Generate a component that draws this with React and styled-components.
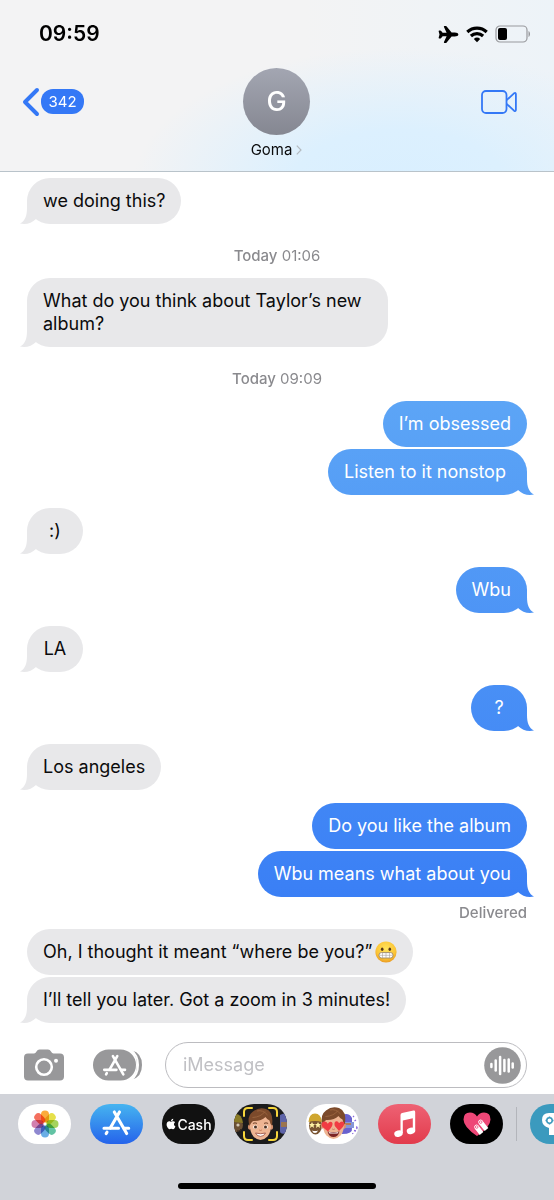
import styled, { createGlobalStyle, css } from 'styled-components'
import { FaApple } from 'react-icons/fa'
import { IoAirplane } from 'react-icons/io5'

const GlobalStyle = createGlobalStyle`
	* {
		box-sizing: border-box;
	}
	body {
		margin: 0;
		background: #fff;
		color: #0b0b0c;
		font-family: Inter, 'Liberation Sans', sans-serif;
	}
	button {
		padding: 0;
		border: 0;
		background: none;
		color: inherit;
		font: inherit;
		cursor: pointer;
	}
	svg {
		display: block;
		flex: none;
	}
`

const Screen = styled.div`
	min-height: 100vh;
	display: flex;
	flex-direction: column;
	overflow-x: hidden;
`

const Header = styled.header`
	padding-bottom: 12px;
	border-bottom: 1px solid #b9c3ca;
	background:
		radial-gradient(ellipse 48% 80% at 72% 108%, #d9efff 0%, #dcf0fe 40%, rgba(230, 242, 251, 0) 100%),
		linear-gradient(90deg, #f3f3f4 55%, #edf3f8 100%);
`

const StatusBar = styled.div`
	height: 68px;
	padding: 0 23px 0 39px;
	display: flex;
	align-items: center;
	justify-content: space-between;
`

const Clock = styled.time`
	color: #000;
	font-size: 21px;
	line-height: 24px;
	font-weight: 600;
`

const StatusIcons = styled.div`
	display: flex;
	align-items: center;
	gap: 7px;
	color: #000;
`

const NavBar = styled.nav`
	padding: 0 37px 0 22px;
	display: grid;
	grid-template-columns: 1fr auto 1fr;
`

const NavButton = styled.button`
	height: 67px;
	display: flex;
	align-items: center;
	gap: 1px;
	justify-self: ${p => p.$end ? 'end' : 'start'};
	margin-right: ${p => p.$end ? '0' : '15px'};
`

const Unread = styled.span`
	min-width: 43px;
	padding: 0 7px;
	border-radius: 12px;
	background: #3478f6;
	color: #fff;
	font-size: 15px;
	line-height: 25px;
`

const Contact = styled.button`
	display: flex;
	flex-direction: column;
	align-items: center;
	gap: 6px;
	margin-left: 14px;
`

const Avatar = styled.span`
	width: 67px;
	height: 67px;
	border-radius: 50%;
	background: linear-gradient(#a3a6b2, #858791);
	color: #fff;
	font-size: 27px;
	line-height: 67px;
	font-weight: 500;
`

const ContactName = styled.span`
	display: flex;
	align-items: center;
	gap: 4px;
	font-size: 15px;
	line-height: 18px;
`

const Thread = styled.main`
	flex: 1;
	padding: 6px 27px 19px;
	display: flex;
	flex-direction: column;
`

const Stamp = styled.time`
	margin: 22px 0 12px;
	color: #8a8a8e;
	font-size: 15px;
	line-height: 20px;
	text-align: center;
	b {
		font-weight: 500;
	}
`

const Receipt = styled.div`
	margin: 8px 0;
	color: #8a8a8e;
	font-size: 15px;
	line-height: 16px;
	font-weight: 500;
	text-align: right;
`

const sent = css`
	align-self: flex-end;
	--fill: linear-gradient(#5fa8f6 30%, #3a7ff5 75%) fixed;
	color: #fff;
`

const received = css`
	align-self: flex-start;
	--fill: #e8e8ea;
`

const Bubble = styled.p`
	${p => p.$mine ? sent : received}
	position: relative;
	min-width: 56px;
	max-width: ${p => p.$long ? '361px' : '80%'};
	margin: ${p => p.$gap}px 0 0;
	padding: 11px 16px 12px;
	border-radius: 23px;
	background: var(--fill);
	font-size: 18px;
	line-height: 23px;
	text-align: ${p => p.$center ? 'center' : 'left'};
	svg {
		display: inline-block;
		vertical-align: -5px;
		margin-left: 3px;
	}
	${p => p.$tail && css`
		&::after {
			content: '';
			position: absolute;
			bottom: 0;
			${p.$mine ? 'right: -7px;' : 'left: -7px; transform: scaleX(-1);'}
			width: 24px;
			height: 23px;
			background: var(--fill);
			clip-path: path('M17 0V7C17 15 19 20 24 22.5C18 24 12 22 8 18L0 0Z');
		}
	`}
`

const Composer = styled.form`
	padding: 0 27px 6px 24px;
	display: flex;
	align-items: center;
`

const RoundButton = styled.button`
	margin-right: ${p => p.$space}px;
`

const Field = styled.div`
	flex: 1;
	height: 46px;
	padding: 0 5px 0 17px;
	border: 1px solid #bcbcc0;
	border-radius: 23px;
	display: flex;
	align-items: center;
`

const MessageInput = styled.input`
	flex: 1;
	min-width: 0;
	padding: 0;
	border: 0;
	outline: 0;
	background: none;
	font: inherit;
	font-size: 18px;
	line-height: 24px;
	&::placeholder {
		color: #c0c0c4;
		opacity: 1;
	}
`

const Tray = styled.footer`
	background: #d1d3d9;
`

const AppStrip = styled.div`
	padding: 10px 0 0 18px;
	display: flex;
	gap: 19px;
	overflow: hidden;
`

const AppButton = styled.button`
	flex: none;
	width: 53px;
	height: 40px;
	border-radius: 20px;
	overflow: hidden;
	display: flex;
	align-items: center;
	justify-content: center;
	background: ${p => p.$fill};
	color: #fff;
	font-size: 14px;
	font-weight: 500;
`

const Divider = styled.span`
	flex: none;
	align-self: center;
	width: 1px;
	height: 34px;
	margin: 0 -6px;
	background: #b3b5bb;
`

const HomeBar = styled.div`
	width: 198px;
	height: 6px;
	margin: 39px auto 0;
	border-radius: 3px;
	background: #000;
`

const HomeArea = styled.div`
	padding-bottom: 11px;
`

function WifiIcon() {
	return (
		<svg width="22" height="17" viewBox="0 0 22 17" fill="none" stroke="currentColor" strokeWidth="3.2">
			<path d="M1.3 6A14.2 14.2 0 0 1 20.7 6" />
			<path d="M4.9 10A9 9 0 0 1 17.1 10" />
			<path d="M7.8 12.9A4.8 4.8 0 0 1 14.2 12.9L11 16.3Z" fill="currentColor" stroke="none" />
		</svg>
	)
}

function BatteryIcon() {
	return (
		<svg width="36" height="18" viewBox="0 0 36 18">
			<rect x="1" y="1" width="31" height="16" rx="4" fill="none" stroke="#98999d" strokeWidth="1.2" />
			<rect x="3" y="3" width="9" height="12" rx="2" />
			<path d="M33.5 6C35.5 7 35.5 11 33.5 12Z" fill="#98999d" />
		</svg>
	)
}

function BackIcon() {
	return (
		<svg width="18" height="30" viewBox="0 0 18 30" fill="none" stroke="#3478f6" strokeWidth="4" strokeLinecap="round" strokeLinejoin="round">
			<path d="M15 3L3 15L15 27" />
		</svg>
	)
}

function VideoIcon() {
	return (
		<svg width="37" height="26" viewBox="0 0 37 26" fill="none" stroke="#3478f6" strokeWidth="1.8" strokeLinejoin="round">
			<rect x="2" y="2" width="24.5" height="22" rx="4" />
			<path d="M26.6 11.2L34 4.3Q35.9 3.2 35.9 5.2V20.8Q35.9 22.8 34 21.7L26.6 14.8" />
		</svg>
	)
}

function GrimaceIcon() {
	return (
		<svg width="22" height="22" viewBox="0 0 22 22" role="img" aria-label="Grimacing face">
			<defs>
				<radialGradient id="grimace" cx=".5" cy=".35" r=".65">
					<stop offset="0" stopColor="#ffe45c" />
					<stop offset=".7" stopColor="#fbc436" />
					<stop offset="1" stopColor="#e99a22" />
				</radialGradient>
			</defs>
			<circle cx="11" cy="11" r="10.6" fill="url(#grimace)" />
			<ellipse cx="7.2" cy="8.3" rx="1.3" ry="1.7" fill="#56371a" />
			<ellipse cx="14.8" cy="8.3" rx="1.3" ry="1.7" fill="#56371a" />
			<rect x="4" y="11.6" width="14" height="5.4" rx="2.4" fill="#fff" stroke="#9b8768" strokeWidth=".9" />
			<path d="M4.2 14.3H17.8M7.5 11.8V16.8M11 11.8V16.8M14.5 11.8V16.8" stroke="#a9a39a" strokeWidth=".6" />
		</svg>
	)
}

function CameraIcon() {
	return (
		<svg width="40" height="32" viewBox="0 0 40 32">
			<path d="M4 4.5H10Q11.5 4.5 12.5 2.5T15.5 .5H24Q26 .5 27 2.5T29.5 4.5H36Q40 4.5 40 8.5V27.5Q40 31.5 36 31.5H4Q0 31.5 0 27.5V8.5Q0 4.5 4 4.5Z" fill="#98989a" />
			<circle cx="20" cy="18" r="7.8" fill="none" stroke="#fff" strokeWidth="2.6" />
			<circle cx="32" cy="11.8" r="2" fill="#fff" />
		</svg>
	)
}

// The three crossed sticks of the App Store mark
function Sticks() {
	return (
		<g fill="none" stroke="#fff" strokeWidth="3.1" strokeLinecap="round">
			<path d="M29.5 8L20.3 24M24.3 8L36.7 29.5" />
			<path d="M14 24.2H28.5M34 24.2H38.7" />
			<path d="M17 28.2L16.2 29.6" />
		</g>
	)
}

function AppsIcon() {
	return (
		<svg width="49" height="32" viewBox="0 0 49 32">
			<path d="M39 1.5Q49 4 49 16T39 30.5Q44 25 44 16T39 1.5Z" fill="#98989a" />
			<rect y=".5" width="43" height="31" rx="15.5" fill="#98989a" />
			<path d="M38 1Q45 6 45 16T38 31" fill="none" stroke="#fff" strokeWidth="2" />
			<g transform="translate(-.5 .5) scale(.84)">
				<Sticks />
			</g>
		</svg>
	)
}

function StoreIcon() {
	return <svg width="53" height="40" viewBox="0 0 53 40"><Sticks /></svg>
}

const waves = [[6, 3], [10.3, 10], [14.7, 17], [19, 11], [23.3, 12], [27.3, 4]]

function VoiceIcon() {
	return (
		<svg width="37" height="37" viewBox="0 0 37 37">
			<circle cx="18.5" cy="18.5" r="18.3" fill="#98989a" />
			<g stroke="#fff" strokeWidth="2.5" strokeLinecap="round">
				{waves.map(([x, h]) => <path key={x} d={`M${x + 1.4} ${18.5 - h / 2}v${h}`} />)}
			</g>
		</svg>
	)
}

const petals = ['#fbab3c', '#e6e04a', '#a5d35c', '#62c3a4', '#6aaee6', '#8f88d0', '#d27fae', '#f4705f']

function PhotosIcon() {
	return (
		<svg width="28" height="28" viewBox="-14 -14 28 28">
			{petals.map((fill, i) => (
				<rect key={fill} x="-4" y="-13.5" width="8" height="12" rx="4" fill={fill} transform={`rotate(${i * 45})`} style={{ mixBlendMode: 'multiply' }} />
			))}
		</svg>
	)
}

function Boy({ hearts }) {
	return (
		<g>
			<ellipse cx="15.7" cy="23" rx="1.8" ry="2.8" fill="#d8936f" />
			<ellipse cx="37.3" cy="23" rx="1.8" ry="2.8" fill="#d8936f" />
			<path d="M16 16Q15 28 19.5 32.5Q26.5 39.5 33.5 32.5Q38 28 37 16Q32 10 26 10T16 16Z" fill="#eeb593" />
			<path d="M15.5 22Q12.5 12 19 7.5Q25 2.5 32 5Q40 8 38 21.5Q36 20 35.5 16.5Q33 15.5 31.5 13Q27 17.5 19 17Q17 18.5 15.5 22Z" fill="#7c4a2b" />
			<path d="M18.5 13.5Q27 13 31 7.5M23 7Q29 5.5 33.5 11" fill="none" stroke="#99633e" strokeWidth="1" />
			<path d="M25.2 26Q26.5 27 27.8 26" fill="none" stroke="#c57a5a" strokeWidth="1" />
			{hearts ? (
				<g>
					<path d="M20.5 28.5Q26.5 30 32.5 28.5Q31 34 26.5 34T20.5 28.5Z" fill="#7b2526" />
					<path d="M21.5 29Q26.5 30.3 31.5 29L30.5 30.6H22.5Z" fill="#fff" />
					<path d="M21 28.5L15.5 24Q13.2 19.3 17 18.5Q19.7 18.3 20.8 20.8Q22.5 17.8 25 19.3Q27.3 21.8 21 28.5Z" fill="#f13c43" />
					<path d="M32 28L27.8 23Q26.7 19 29.2 18.3Q31.3 18 32 20.3Q34 17.5 36.8 19Q39 21.8 32 28Z" fill="#f13c43" />
				</g>
			) : (
				<g>
					<path d="M21.5 29Q26.5 30.5 31.5 29Q30 32.4 26.5 32.4T21.5 29Z" fill="#fff" stroke="#96493c" strokeWidth=".8" />
					<path d="M18.9 19.4Q21 18.3 23 19.4M30 19.4Q32 18.3 34.1 19.4" fill="none" stroke="#6f4229" strokeWidth="1" />
					<ellipse cx="21.3" cy="23" rx="2.2" ry="1.8" fill="#fff" />
					<ellipse cx="31.7" cy="23" rx="2.2" ry="1.8" fill="#fff" />
					<circle cx="21.5" cy="23" r="1.5" fill="#4a3020" />
					<circle cx="31.5" cy="23" r="1.5" fill="#4a3020" />
				</g>
			)}
		</g>
	)
}

function MemojiIcon() {
	return (
		<svg width="53" height="40" viewBox="0 0 53 40">
			<circle cx="2" cy="21" r="7" fill="#6c5135" />
			<path d="M0 10Q8 9 9 19L0 18Z" fill="#8a7b27" />
			<circle cx="4" cy="21" r="1.6" fill="#d4c8b4" />
			<path d="M3 27Q6 28 7 25" stroke="#32221a" fill="none" />
			<path d="M46 11Q52 7 53 13V29Q46 31 46 27Z" fill="#5d63a8" />
			<path d="M47 18H53V23H47Z" fill="#9b744e" />
			<Boy />
			<path d="M10 12V8Q10 4 14 4H18M35 4H39Q43 4 43 8V12M43 28V32Q43 36 39 36H35M18 36H14Q10 36 10 32V28" fill="none" stroke="#f6d63c" strokeWidth="2" strokeLinecap="round" />
		</svg>
	)
}

function StickersIcon() {
	return (
		<svg width="53" height="40" viewBox="0 0 53 40">
			<ellipse cx="9.5" cy="21" rx="6.5" ry="9.5" fill="#795432" />
			<path d="M2.5 18Q3 9.5 9 9.5T16 18Q9 16 2.5 18Z" fill="#cfa62f" />
			<path d="M6 18L7 20H9L7.5 21.5L8 24L6 22.5L4 24L4.5 21.5L3 20H5Z" fill="#fff3a4" />
			<path d="M12 18L13 20H15L13.5 21.5L14 24L12 22.5L10 24L10.5 21.5L9 20H11Z" fill="#fff3a4" />
			<path d="M6 26.5Q9 27.6 12 26.5Q11 29 9 29T6 26.5Z" fill="#fff" />
			<path d="M36 11Q43 8 46 14V19H36ZM36 24H46Q47 30 36 30Z" fill="#6962cf" />
			<path d="M36 18H48V24H36Z" fill="#8695d8" />
			<path d="M39 20H45" stroke="#b27c56" strokeWidth="2" />
			<path d="M47 12L48 13M48.5 17L50 16M50 23Q52 23 50.5 25M48 26.5L50 27M47 30L46.5 29" fill="none" stroke="#8a69dc" strokeWidth="1.3" />
			<g transform="translate(1 -1)">
				<Boy hearts />
			</g>
		</svg>
	)
}

function MusicIcon() {
	return (
		<svg width="24" height="28" viewBox="0 0 24 28" fill="#fff">
			<path d="M7.5 5Q7.5 3.5 9 3.1L20.5.6Q22.2.3 22.2 2V20.5H19.8V8.2L9.8 10.4V23H7.5Z" />
			<ellipse cx="5.5" cy="23.6" rx="4.3" ry="3.2" transform="rotate(-15 5.5 23.6)" />
			<ellipse cx="18" cy="20.8" rx="4.3" ry="3.2" transform="rotate(-15 18 20.8)" />
		</svg>
	)
}

function TouchIcon() {
	return (
		<svg width="30" height="26" viewBox="0 0 30 26">
			<path d="M15 25Q1.5 16 1.5 8.5Q1.5 1.5 8 1.5Q12.5 1.5 15 5.5Q17.5 1.5 22 1.5Q28.5 1.5 28.5 8.5Q28.5 16 15 25Z" fill="#ee4777" />
			<g fill="none" stroke="#fff" strokeWidth="4.6">
				<path d="M14.5 16L19.5 22.5M18.5 11L24.5 18.5" />
				<path d="M14.5 16L15 16.6M18.5 11L19 11.6" strokeLinecap="round" />
			</g>
			<circle cx="14.7" cy="16" r="1.3" fill="none" stroke="#ee4777" strokeWidth=".8" />
			<circle cx="18.7" cy="11.1" r="1.3" fill="none" stroke="#ee4777" strokeWidth=".8" />
		</svg>
	)
}

function HeadIcon() {
	return (
		<svg width="53" height="40" viewBox="0 0 53 40">
			<path d="M19 31V24Q12 22 12 16Q12 9 19 9H34V31Z" fill="#fff" />
			<circle cx="19.5" cy="16.5" r="2.7" fill="none" stroke="#3b9abe" strokeWidth="1.5" />
			<path d="M19.5 12.5V14M19.5 19V20.5M15.5 16.5H17M22 16.5H23.5" stroke="#3b9abe" strokeWidth="1.4" />
		</svg>
	)
}

const apps = [
	{ name: 'Photos', fill: '#fff', icon: <PhotosIcon /> },
	{ name: 'App Store', fill: 'linear-gradient(#46b4f0, #2563eb)', icon: <StoreIcon /> },
	{ name: 'Apple Cash', fill: '#111', icon: <><FaApple size={12} />Cash</> },
	{ name: 'Memoji', fill: '#1b1b1c', icon: <MemojiIcon /> },
	{ name: 'Stickers', fill: '#fff', icon: <StickersIcon /> },
	{ name: 'Music', fill: 'linear-gradient(#ee6274, #e23b4c)', icon: <MusicIcon /> },
	{ name: 'Digital Touch', fill: '#000', icon: <TouchIcon /> },
]

export default function App() {
	return (
		<Screen>
			<GlobalStyle />
			<Header>
				<StatusBar>
					<Clock>09:59</Clock>
					<StatusIcons>
						<IoAirplane size={21} />
						<WifiIcon />
						<BatteryIcon />
					</StatusIcons>
				</StatusBar>
				<NavBar>
					<NavButton type="button" aria-label="Back, 342 unread">
						<BackIcon />
						<Unread>342</Unread>
					</NavButton>
					<Contact type="button">
						<Avatar>G</Avatar>
						<ContactName>
							Goma
							<svg width="6" height="10" viewBox="0 0 6 10" fill="none" stroke="#b3bac0" strokeWidth="1.2">
								<path d="M.8.6L5 5L.8 9.4" />
							</svg>
						</ContactName>
					</Contact>
					<NavButton type="button" aria-label="Video call" $end>
						<VideoIcon />
					</NavButton>
				</NavBar>
			</Header>

			<Thread>
				<Bubble $gap={0} $tail>we doing this?</Bubble>
				<Stamp><b>Today</b> 01:06</Stamp>
				<Bubble $gap={0} $tail $long>What do you think about Taylor’s new album?</Bubble>
				<Stamp><b>Today</b> 09:09</Stamp>
				<Bubble $mine $gap={0}>I’m obsessed</Bubble>
				<Bubble $mine $gap={2} $tail>Listen to it nonstop&nbsp;</Bubble>
				<Bubble $gap={13} $tail $center>:)</Bubble>
				<Bubble $mine $gap={13} $tail>Wbu</Bubble>
				<Bubble $gap={13} $tail $center>LA</Bubble>
				<Bubble $mine $gap={13} $tail $center>?</Bubble>
				<Bubble $gap={13} $tail>Los angeles</Bubble>
				<Bubble $mine $gap={13}>Do you like the album</Bubble>
				<Bubble $mine $gap={2} $tail>Wbu means what about you</Bubble>
				<Receipt>Delivered</Receipt>
				<Bubble $gap={0}>Oh, I thought it meant “where be you?”<GrimaceIcon /></Bubble>
				<Bubble $gap={2} $tail>I’ll tell you later. Got a zoom in 3 minutes!</Bubble>
			</Thread>

			<Composer onSubmit={e => e.preventDefault()}>
				<RoundButton type="button" aria-label="Camera" $space={29}><CameraIcon /></RoundButton>
				<RoundButton type="button" aria-label="Apps" $space={23}><AppsIcon /></RoundButton>
				<Field>
					<MessageInput aria-label="Message" placeholder="iMessage" />
					<button type="button" aria-label="Record audio"><VoiceIcon /></button>
				</Field>
			</Composer>

			<Tray>
				<AppStrip>
					{apps.map(app => (
						<AppButton key={app.name} type="button" aria-label={app.name} $fill={app.fill}>{app.icon}</AppButton>
					))}
					<Divider />
					<AppButton type="button" aria-label="More" $fill="#3b9abe"><HeadIcon /></AppButton>
				</AppStrip>
				<HomeArea>
					<HomeBar />
				</HomeArea>
			</Tray>
		</Screen>
	)
}
